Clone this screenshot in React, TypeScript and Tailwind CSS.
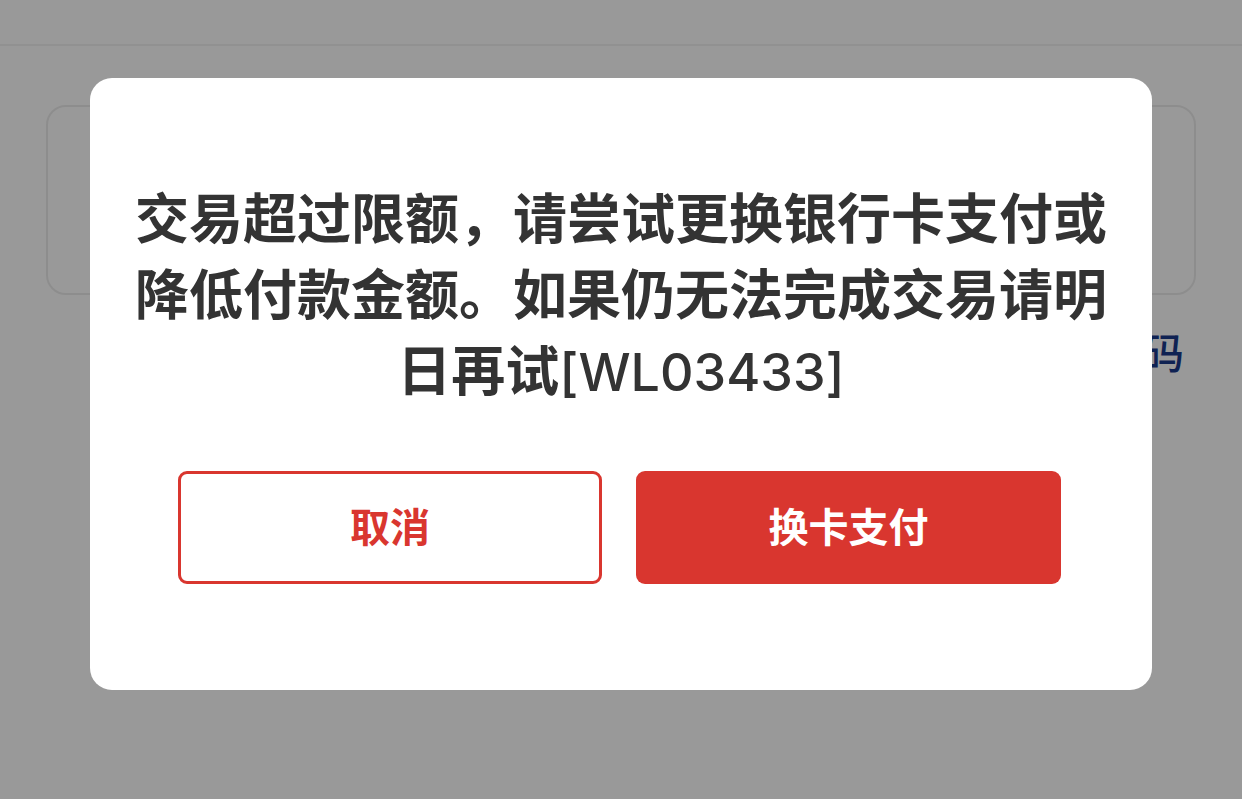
import React from 'react';

const font = { fontFamily: '"Liberation Sans", "Noto Sans CJK SC", sans-serif' };

const App: React.FC = () => {
  return (
    <div className="relative h-[799px] w-[1242px] overflow-hidden bg-white" style={font}>
      {/* page behind the dialog */}
      <div className="h-[46px] border-b-2 border-[#f2f2f2]" />
      <div className="mx-[46px] mt-[59px] h-[190px] rounded-[20px] border-2 border-[#ececec]" />
      <div className="flex justify-end pr-[58px] pt-[32px]">
        <span className="text-[42px] font-medium leading-[56px] text-[#1a3a8a]">忘记密码</span>
      </div>

      {/* mask */}
      <div className="absolute inset-0 flex items-start justify-center bg-black/40 pt-[78px]">
        <div className="w-[1062px] rounded-[22px] bg-white pb-[106px] pt-[104px]">
          <p className="px-[40px] text-center text-[54px] font-semibold leading-[76px] text-[#333333]">
            交易超过限额，请尝试更换银行卡支付或降低付款金额。如果仍无法完成交易请明日再试
            <span className="font-['Inter'] text-[52px] font-medium">[WL03433]</span>
          </p>
          <div className="mt-[60px] flex gap-[34px] pl-[88px]">
            <button className="flex h-[113px] w-[424px] items-center justify-center rounded-[9px] border-[3px] border-[#d9362f] bg-white text-[40px] font-semibold text-[#d9362f]">
              取消
            </button>
            <button className="flex h-[113px] w-[425px] items-center justify-center rounded-[9px] bg-[#d9362f] text-[40px] font-semibold text-white">
              换卡支付
            </button>
          </div>
        </div>
      </div>
    </div>
  );
};

export default App;
